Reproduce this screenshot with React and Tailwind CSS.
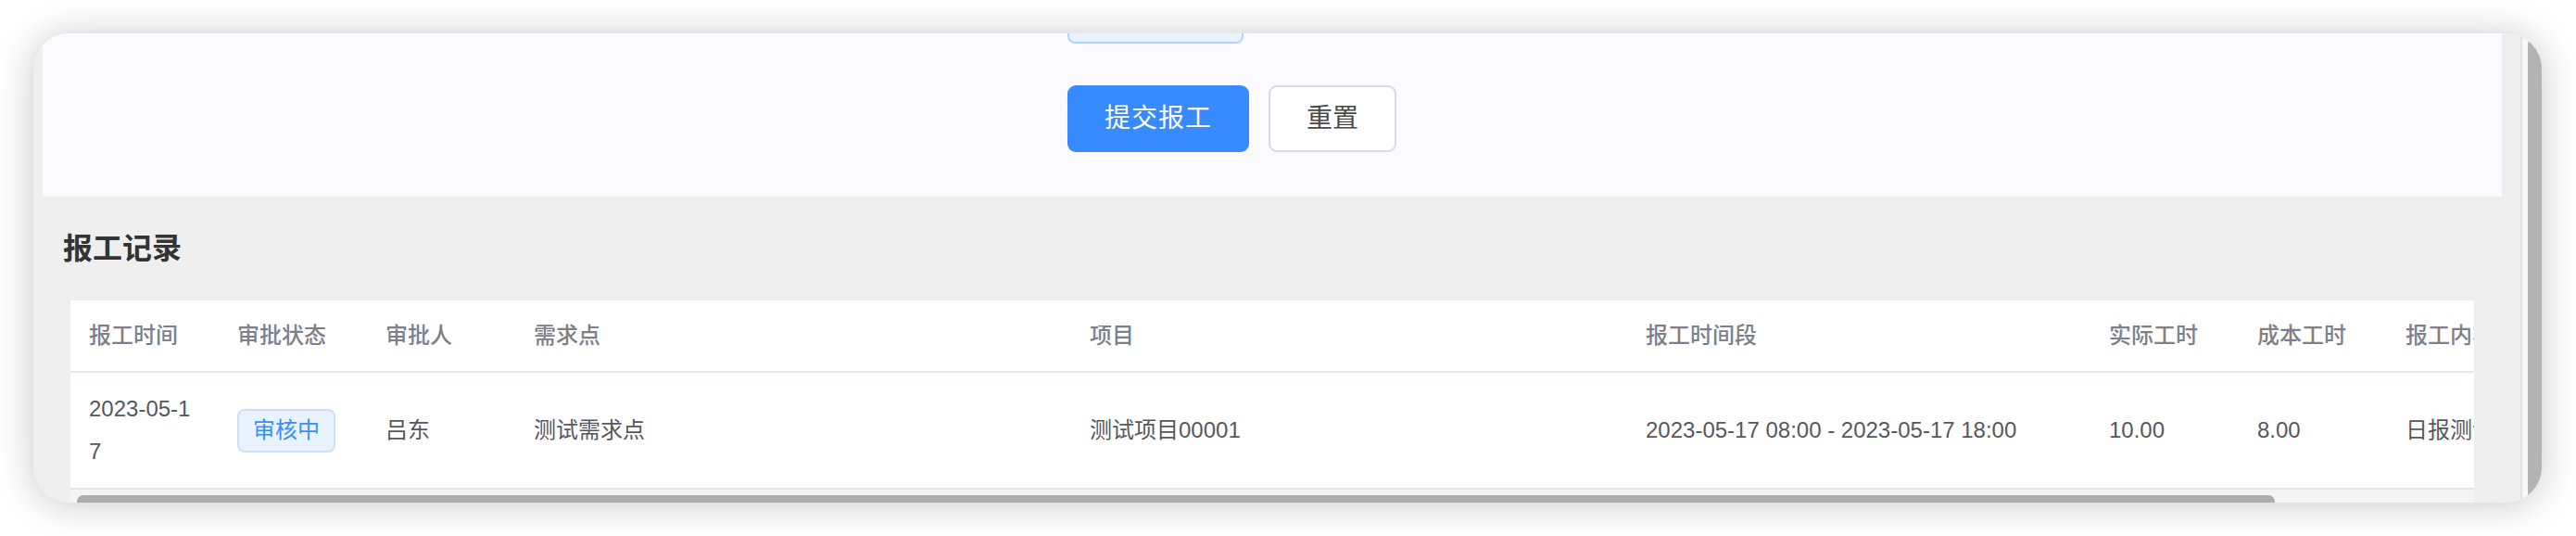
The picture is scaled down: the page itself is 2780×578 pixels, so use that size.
import React from 'react';

const columns = [
    { title: '报工时间', width: 'w-[160px]' },
    { title: '审批状态', width: 'w-[160px]' },
    { title: '审批人', width: 'w-[160px]' },
    { title: '需求点', width: 'w-[600px]' },
    { title: '项目', width: 'w-[600px]' },
    { title: '报工时间段', width: 'w-[500px]' },
    { title: '实际工时', width: 'w-[160px]' },
    { title: '成本工时', width: 'w-[160px]' },
    { title: '报工内容', width: 'w-[320px]' },
];

const record = {
    date: '2023-05-17',
    status: '审核中',
    approver: '吕东',
    demand: '测试需求点',
    project: '测试项目00001',
    range: '2023-05-17 08:00 - 2023-05-17 18:00',
    actual: '10.00',
    cost: '8.00',
    content: '日报测试内容',
};

const App = () => {
    return (
        <div
            className="w-[2780px] h-[578px] bg-white pt-[36px] pl-[36px] overflow-hidden"
            style={{ fontFamily: '"Liberation Sans", "Noto Sans CJK SC", sans-serif' }}
        >
            <div className="w-[2707px] h-[506px] rounded-[38px] overflow-hidden bg-[#efefef] shadow-[0_2px_40px_rgba(0,0,0,0.22)] flex">
                {/* main scroll content */}
                <div className="flex-1 flex flex-col overflow-hidden">
                    {/* form panel (scrolled) */}
                    <div className="ml-[10px] mr-[20px] h-[176px] shrink-0 bg-[#fbfaff] pl-[1106px] overflow-hidden">
                        <div className="w-[190px] h-[56px] -mt-[45px] rounded-lg border-2 border-[#b0d4ff] bg-[#e8f3ff]" />
                        <div className="flex gap-[21px] mt-[45px]">
                            <button className="w-[196px] h-[72px] rounded-[9px] bg-[#388bff] text-white text-[28px] tracking-[1px]">
                                提交报工
                            </button>
                            <button className="w-[138px] h-[72px] rounded-[9px] border-2 border-[#d9dae2] bg-white text-[#4a4a4a] text-[28px]">
                                重置
                            </button>
                        </div>
                    </div>

                    <h2 className="mt-[34px] pl-[32px] h-[44px] leading-[44px] text-[32px] font-bold text-[#333] shrink-0">
                        报工记录
                    </h2>

                    {/* records table */}
                    <div className="mt-[34px] ml-[40px] w-[2594px] bg-white overflow-hidden shrink-0">
                        <div className="flex h-[78px] items-center border-b-2 border-[#e6e8f0] whitespace-nowrap">
                            {columns.map((c) => (
                                <div key={c.title} className={`${c.width} shrink-0 px-[20px] text-[24px] font-medium text-[#7d8089]`}>
                                    {c.title}
                                </div>
                            ))}
                        </div>
                        <div className="flex h-[126px] items-center border-b-2 border-[#e4e5ee] text-[24px] text-[#55585e] whitespace-nowrap">
                            <div className="w-[160px] shrink-0 px-[20px]">
                                <div className="w-[120px] break-all whitespace-normal leading-[46px]">{record.date}</div>
                            </div>
                            <div className="w-[160px] shrink-0 px-[20px]">
                                <span className="inline-flex items-center justify-center w-[106px] h-[47px] rounded-[8px] border-2 border-[#c9e1ff] bg-[#e8f3ff] text-[#3a8cff]">
                                    {record.status}
                                </span>
                            </div>
                            <div className="w-[160px] shrink-0 px-[20px]">{record.approver}</div>
                            <div className="w-[600px] shrink-0 px-[20px]">{record.demand}</div>
                            <div className="w-[600px] shrink-0 px-[20px]">{record.project}</div>
                            <div className="w-[500px] shrink-0 px-[20px]">{record.range}</div>
                            <div className="w-[160px] shrink-0 px-[20px]">{record.actual}</div>
                            <div className="w-[160px] shrink-0 px-[20px]">{record.cost}</div>
                            <div className="w-[320px] shrink-0 px-[20px]">{record.content}</div>
                        </div>
                        {/* horizontal scrollbar */}
                        <div className="h-[24px] bg-[#f4f4f5] pt-[6px] pl-[7px]">
                            <div className="w-[2372px] h-[14px] rounded-full bg-[#adadad]" />
                        </div>
                    </div>
                </div>

                {/* vertical scrollbar */}
                <div className="w-[23px] shrink-0 border-l-2 border-[#e2e2e2] bg-[#f8f8f8] pl-[6px] pt-[4px]">
                    <div className="w-[16px] h-full rounded-full bg-[#b3b3b3]" />
                </div>
            </div>
        </div>
    );
};

export default App;
